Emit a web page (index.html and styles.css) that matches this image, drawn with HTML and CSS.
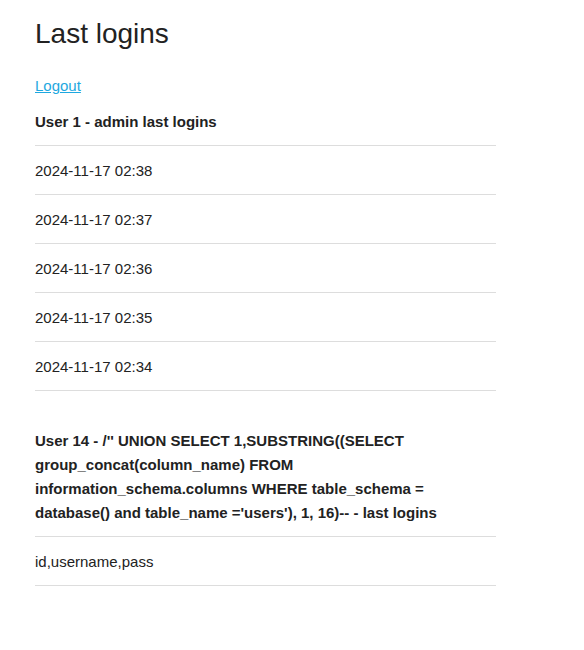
FILE: index.html
```html
<!DOCTYPE html>
<html>
<head>
<meta charset="utf-8">
<link rel="stylesheet" href="styles.css">
</head>
<body>
<div class="page">
  <h1 class="title">Last logins</h1>
  <a class="logout" href="#">Logout</a>
  <section class="user">
    <h2 class="user-head">User 1 - admin last logins</h2>
    <ul class="logins">
      <li>2024-11-17 02:38</li>
      <li>2024-11-17 02:37</li>
      <li>2024-11-17 02:36</li>
      <li>2024-11-17 02:35</li>
      <li>2024-11-17 02:34</li>
    </ul>
  </section>
  <section class="user">
    <h2 class="user-head">User 14 - /'' UNION SELECT 1,SUBSTRING((SELECT group_concat(column_name) FROM information_schema.columns WHERE table_schema = database() and table_name ='users'), 1, 16)-- - last logins</h2>
    <ul class="logins">
      <li>id,username,pass</li>
    </ul>
  </section>
</div>
</body>
</html>
```
FILE: styles.css
```css
html, body {
  margin: 0;
  padding: 0;
  background: #fff;
}
body {
  font-family: "Liberation Sans", Arial, sans-serif;
  color: #222;
  font-size: 15px;
  line-height: 24px;
}
.page {
  width: 461px;
  padding: 16px 0 0 35px;
}
.title {
  margin: 0 0 22px 0;
  font-size: 28px;
  font-weight: normal;
  line-height: 36px;
}
.logout {
  display: block;
  width: max-content;
  color: #1ea8e0;
  text-decoration: underline;
  line-height: 24px;
}
.user {
  margin-top: 12px;
}
.user + .user {
  margin-top: 38px;
}
.user-head {
  margin: 0 0 11px 0;
  font-size: 15px;
  font-weight: bold;
  line-height: 24px;
}
.logins {
  list-style: none;
  margin: 0;
  padding: 0;
}
.logins li {
  border-top: 1px solid #ddd;
  height: 47px;
  padding-top: 1px;
  line-height: 47px;
}
.logins li:last-child {
  border-bottom: 1px solid #ddd;
}
```
